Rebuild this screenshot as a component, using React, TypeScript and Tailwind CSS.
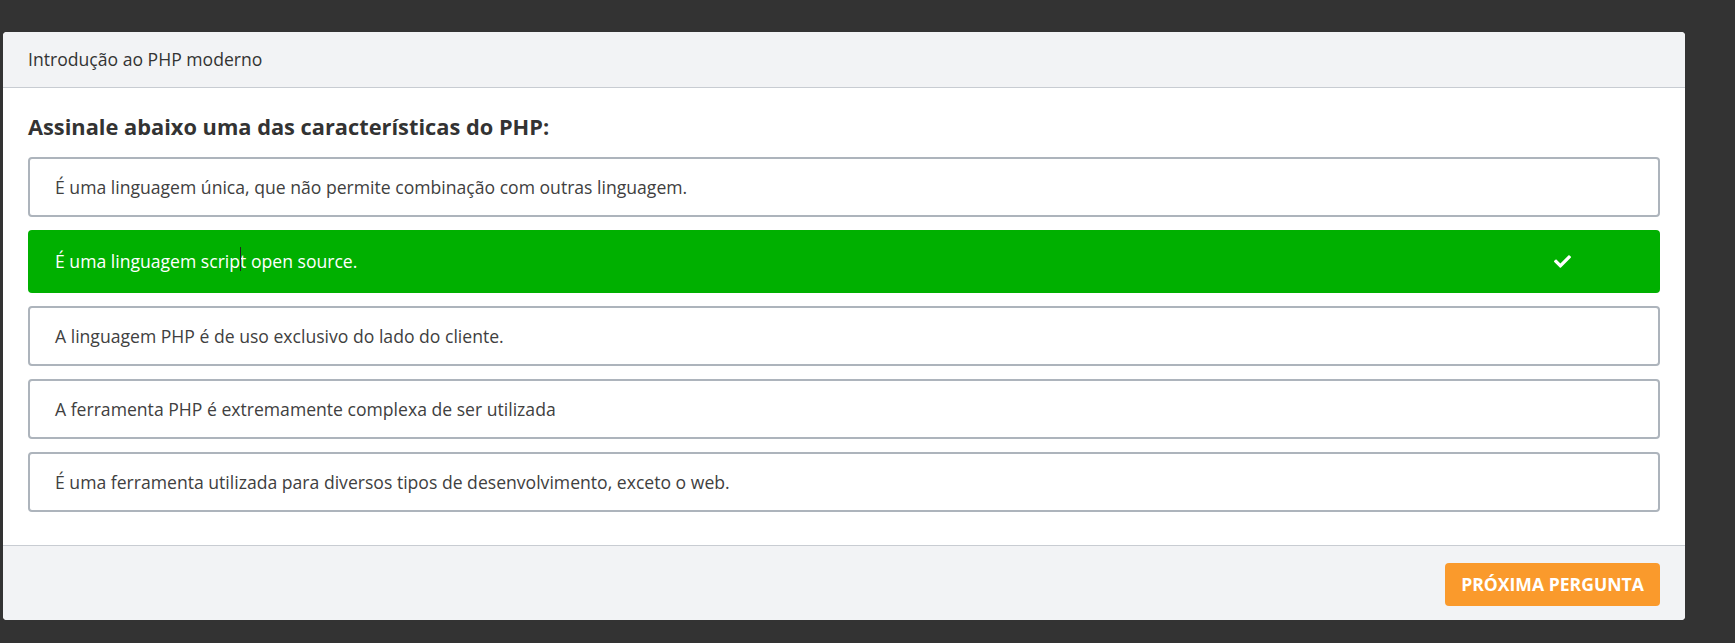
import { FaCheck } from 'react-icons/fa';

const options = [
  { text: 'É uma linguagem única, que não permite combinação com outras linguagem.', correct: false },
  { text: 'É uma linguagem script open source.', correct: true },
  { text: 'A linguagem PHP é de uso exclusivo do lado do cliente.', correct: false },
  { text: 'A ferramenta PHP é extremamente complexa de ser utilizada', correct: false },
  { text: 'É uma ferramenta utilizada para diversos tipos de desenvolvimento, exceto o web.', correct: false },
];

export default function App() {
  return (
    <div className="min-h-screen w-full bg-[#333333] pt-[32px] pl-[3px] font-['Open_Sans',sans-serif]">
      <div className="w-[1682px] rounded-[4px] bg-white overflow-hidden">
        {/* Header */}
        <div className="h-[56px] flex items-center px-[25px] bg-[#f2f3f5] border-b border-[#c8ccd2]">
          <span className="text-[17.6px] text-[#333]">Introdução ao PHP moderno</span>
        </div>

        {/* Question */}
        <div className="px-[25px] pt-[24px] pb-[33px]">
          <h2 className="text-[21.8px] leading-[30px] font-bold text-[#333] mb-[15px]">
            Assinale abaixo uma das características do PHP:
          </h2>
          <div className="flex flex-col gap-[13px]">
            {options.map((o, i) =>
              o.correct ? (
                <div
                  key={i}
                  className="h-[63px] flex items-center justify-between rounded-[4px] bg-[#00b000] pl-[27px] pr-[89px] text-white text-[17.6px]"
                >
                  <span>
                    É uma linguagem scrip
                    <span className="relative">
                      <span className="absolute left-0 top-[-2px] h-[24px] w-px bg-[#222]" />
                    </span>
                    t open source.
                  </span>
                  <FaCheck className="w-[17px] h-[17px]" />
                </div>
              ) : (
                <div
                  key={i}
                  className="h-[60px] flex items-center rounded-[4px] border-2 border-[#adb4bc] pl-[25px] text-[#404040] text-[17.6px]"
                >
                  {o.text}
                </div>
              )
            )}
          </div>
        </div>

        {/* Footer */}
        <div className="h-[75px] flex items-start justify-end px-[25px] pt-[17px] bg-[#f2f3f5] border-t border-[#c8ccd2]">
          <button className="h-[43px] w-[215px] rounded-[4px] bg-[#fa9a2c] text-white text-[17.6px] font-bold uppercase">
            Próxima pergunta
          </button>
        </div>
      </div>
    </div>
  );
}
